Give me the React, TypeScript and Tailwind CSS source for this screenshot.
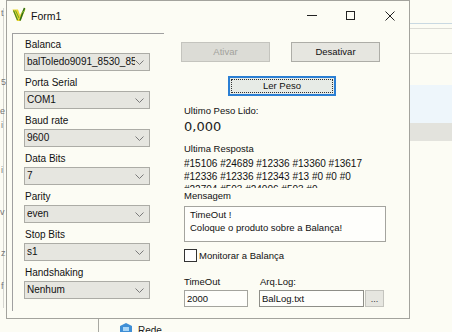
import React from "react";

function Chevron() {
  return (
    <svg width="9" height="5" viewBox="0 0 9 5" className="shrink-0">
      <path d="M0.5 0.5 L4.5 4.5 L8.5 0.5" fill="none" stroke="#7a7a7a" strokeWidth="1" />
    </svg>
  );
}

function Combo({ label, value }: { label: string; value: string }) {
  return (
    <div className="flex flex-col">
      <div className="h-[12px] leading-[12px] text-[10px] text-[#111] ml-[1px] whitespace-nowrap">{label}</div>
      <div className="mt-[2px] h-[18px] w-[126px] border border-[#acaca6] bg-[#e6e6e0] flex items-center pl-[2px] pr-[5px]">
        <span className="w-[112px] overflow-hidden whitespace-nowrap text-[10px] leading-[14px] text-[#111]">{value}</span>
        <span className="flex-1" />
        <Chevron />
      </div>
    </div>
  );
}

function FormIcon() {
  return (
    <svg width="14" height="15" viewBox="0 0 14 15">
      <path d="M0.5 2.5 L6 2.5 L8 8 L12.5 0.5 L13.5 2 L8.5 14 L5 14 Z" fill="#e8d533" />
      <path d="M1.5 3.5 L5.5 13" stroke="#4b8a22" strokeWidth="1.2" />
      <path d="M3.5 3.5 L7 11" stroke="#6aa52a" strokeWidth="1" />
      <path d="M12.5 1 L8 13.5" stroke="#2d6e1a" strokeWidth="1.6" />
      <path d="M9.5 6 L13 3.5" stroke="#78b83a" strokeWidth="1" />
    </svg>
  );
}

export default function App() {
  return (
    <div className="relative w-[452px] h-[332px] overflow-hidden bg-[#fcfcf4] font-['Liberation_Sans',Arial,sans-serif] text-[#111]">
      {/* background window pieces */}
      <div className="absolute left-[410px] top-[23px] w-[42px] h-px bg-[#c9d9e2]" />
      <div className="absolute left-[410px] top-[28px] w-[42px] h-px bg-[#dcdcd6]" />
      <div className="absolute left-[410px] top-[53px] w-[42px] h-px bg-[#d2d2cc]" />
      <div className="absolute left-[410px] top-[85px] w-[42px] h-[38px] bg-[#eef6fb]" />
      <div className="absolute left-[410px] top-[123px] w-[42px] h-[18px] bg-[#e3e3dd]" />
      <div className="absolute left-[98px] top-[319px] w-px h-[13px] bg-[#a8a8a2]" />
      <div className="absolute left-[118px] top-[322px] flex items-start gap-[4px]">
        <svg width="16" height="12" viewBox="0 0 16 12">
          <path d="M2 4 L8 1 L14 4 L14 11 L2 11 Z" fill="#3f8fd6" />
          <rect x="5" y="5" width="6" height="4" fill="#a9d6f7" />
        </svg>
        <span className="mt-[3px] text-[10px] leading-[12px] text-[#222]">Rede</span>
      </div>
      <div className="absolute left-[3px] top-[8px] w-px h-[300px] bg-[#d6d6d0]" />
      <div className="absolute left-[0px] top-0 w-[6px] text-[9px] leading-[10px] text-[#777]">
        <div className="absolute top-[8px] left-[1px]">t</div>
        <div className="absolute top-[77px] left-[1px]">5</div>
        <div className="absolute top-[106px] left-[0px]">e</div>
        <div className="absolute top-[120px] left-[1px]">i</div>
        <div className="absolute top-[165px] left-[1px]">i</div>
        <div className="absolute top-[207px] left-[0px]">v</div>
        <div className="absolute top-[248px] left-[1px]">z</div>
        <div className="absolute top-[281px] left-[1px]">f</div>
      </div>

      {/* Form window */}
      <div className="absolute left-[6px] top-0 w-[404px] h-[319px] border border-[#a3a39d] bg-[#fcfcf4] flex flex-col">
        {/* title bar */}
        <div className="h-[29px] flex items-center shrink-0">
          <div className="ml-[5px] mt-[-2px]">
            <FormIcon />
          </div>
          <span className="ml-[5px] text-[10.5px] leading-[14px] text-[#111]">Form1</span>
          <div className="flex-1" />
          <div className="w-[39px] h-[29px] flex items-center justify-center">
            <div className="w-[10px] h-px bg-[#222]" />
          </div>
          <div className="w-[39px] h-[29px] flex items-center justify-center">
            <div className="w-[9px] h-[9px] border border-[#222]" />
          </div>
          <div className="w-[39px] h-[29px] flex items-center justify-center">
            <svg width="10" height="10" viewBox="0 0 10 10">
              <path d="M0.5 0.5 L9.5 9.5 M9.5 0.5 L0.5 9.5" stroke="#222" strokeWidth="1" />
            </svg>
          </div>
        </div>

        {/* client */}
        <div className="flex flex-1">
          {/* left panel */}
          <div className="shrink-0 mt-[3px] ml-[5px] w-[152px] h-[278px] border-t border-l border-[#a0a0a0] pl-[11px] pt-[5px] flex flex-col gap-[6px]">
            <Combo label="Balanca" value="balToledo9091_8530_8540" />
            <Combo label="Porta Serial" value="COM1" />
            <Combo label="Baud rate" value="9600" />
            <Combo label="Data Bits" value="7" />
            <Combo label="Parity" value="even" />
            <Combo label="Stop Bits" value="s1" />
            <Combo label="Handshaking" value="Nenhum" />
          </div>

          {/* right column */}
          <div className="ml-[17px] flex flex-col">
            <div className="mt-[12px] flex gap-[21px]">
              <div className="w-[89px] h-[20px] border border-[#c4c4be] bg-[#dcdcd6] flex items-center justify-center text-[9.5px] text-[#a2a29c]">
                Ativar
              </div>
              <div className="w-[89px] h-[20px] border border-[#adada7] bg-[#e6e6e0] flex items-center justify-center text-[9.5px] text-[#111]">
                Desativar
              </div>
            </div>
            <div className="mt-[14px] ml-[47px] w-[108px] h-[20px] border-2 border-[#2b7fd4] bg-[#e7ebe6] p-px">
              <div className="w-full h-full border border-dotted border-[#333] flex items-center justify-center text-[9.5px] text-[#111]">
                Ler Peso
              </div>
            </div>
            <div className="mt-[9px] ml-[3px] h-[12px] leading-[12px] text-[9.5px]">Ultimo Peso Lido:</div>
            <div className="mt-[2px] ml-[3px] h-[16px] leading-[16px] text-[13px] font-['DejaVu_Sans',sans-serif] text-[#222]">0,000</div>
            <div className="mt-[8px] ml-[3px] h-[12px] leading-[12px] text-[9.5px]">Ultima Resposta</div>
            <div className="mt-[2px] ml-[3px] h-[31px] overflow-hidden text-[10px] leading-[13px] whitespace-nowrap">
              <div>#15106 #24689 #12336 #13360 #13617</div>
              <div>#12336 #12336 #12343 #13 #0 #0 #0</div>
              <div>#22704 #503 #24006 #503 #0</div>
            </div>
            <div className="mt-[2px] ml-[3px] h-[12px] leading-[12px] text-[9.5px]">Mensagem</div>
            <div className="mt-[4px] ml-[3px] w-[202px] h-[36px] border border-[#a4a49e] bg-[#fefefb] pl-[5px] pt-[1px] text-[9.5px] leading-[13px]">
              <div>TimeOut !</div>
              <div>Coloque o produto sobre a Balança!</div>
            </div>
            <div className="mt-[7px] ml-[3px] flex items-center">
              <div className="w-[13px] h-[13px] border border-[#333] bg-white" />
              <span className="ml-[2px] text-[9.5px] leading-[12px]">Monitorar a Balança</span>
            </div>
            <div className="mt-[14px] ml-[3px] flex items-end">
              <div className="flex flex-col w-[75px]">
                <div className="h-[12px] leading-[12px] text-[9.5px]">TimeOut</div>
                <div className="mt-[2px] w-[64px] h-[17px] border border-[#a4a49e] bg-[#fefefb] pl-[2px] text-[9.5px] leading-[15px]">2000</div>
              </div>
              <div className="flex flex-col">
                <div className="h-[12px] leading-[12px] text-[9.5px] ml-[1px]">Arq.Log:</div>
                <div className="mt-[2px] flex">
                  <div className="w-[105px] h-[17px] border border-[#8e8e88] bg-[#fefefb] pl-[2px] text-[9.5px] leading-[15px]">BalLog.txt</div>
                  <div className="ml-[1px] w-[19px] h-[17px] border border-[#c4c4be] bg-[#e6e6e0] flex items-center justify-center text-[9px] leading-[10px] text-[#333]">...</div>
                </div>
              </div>
            </div>
          </div>
        </div>
      </div>
    </div>
  );
}
